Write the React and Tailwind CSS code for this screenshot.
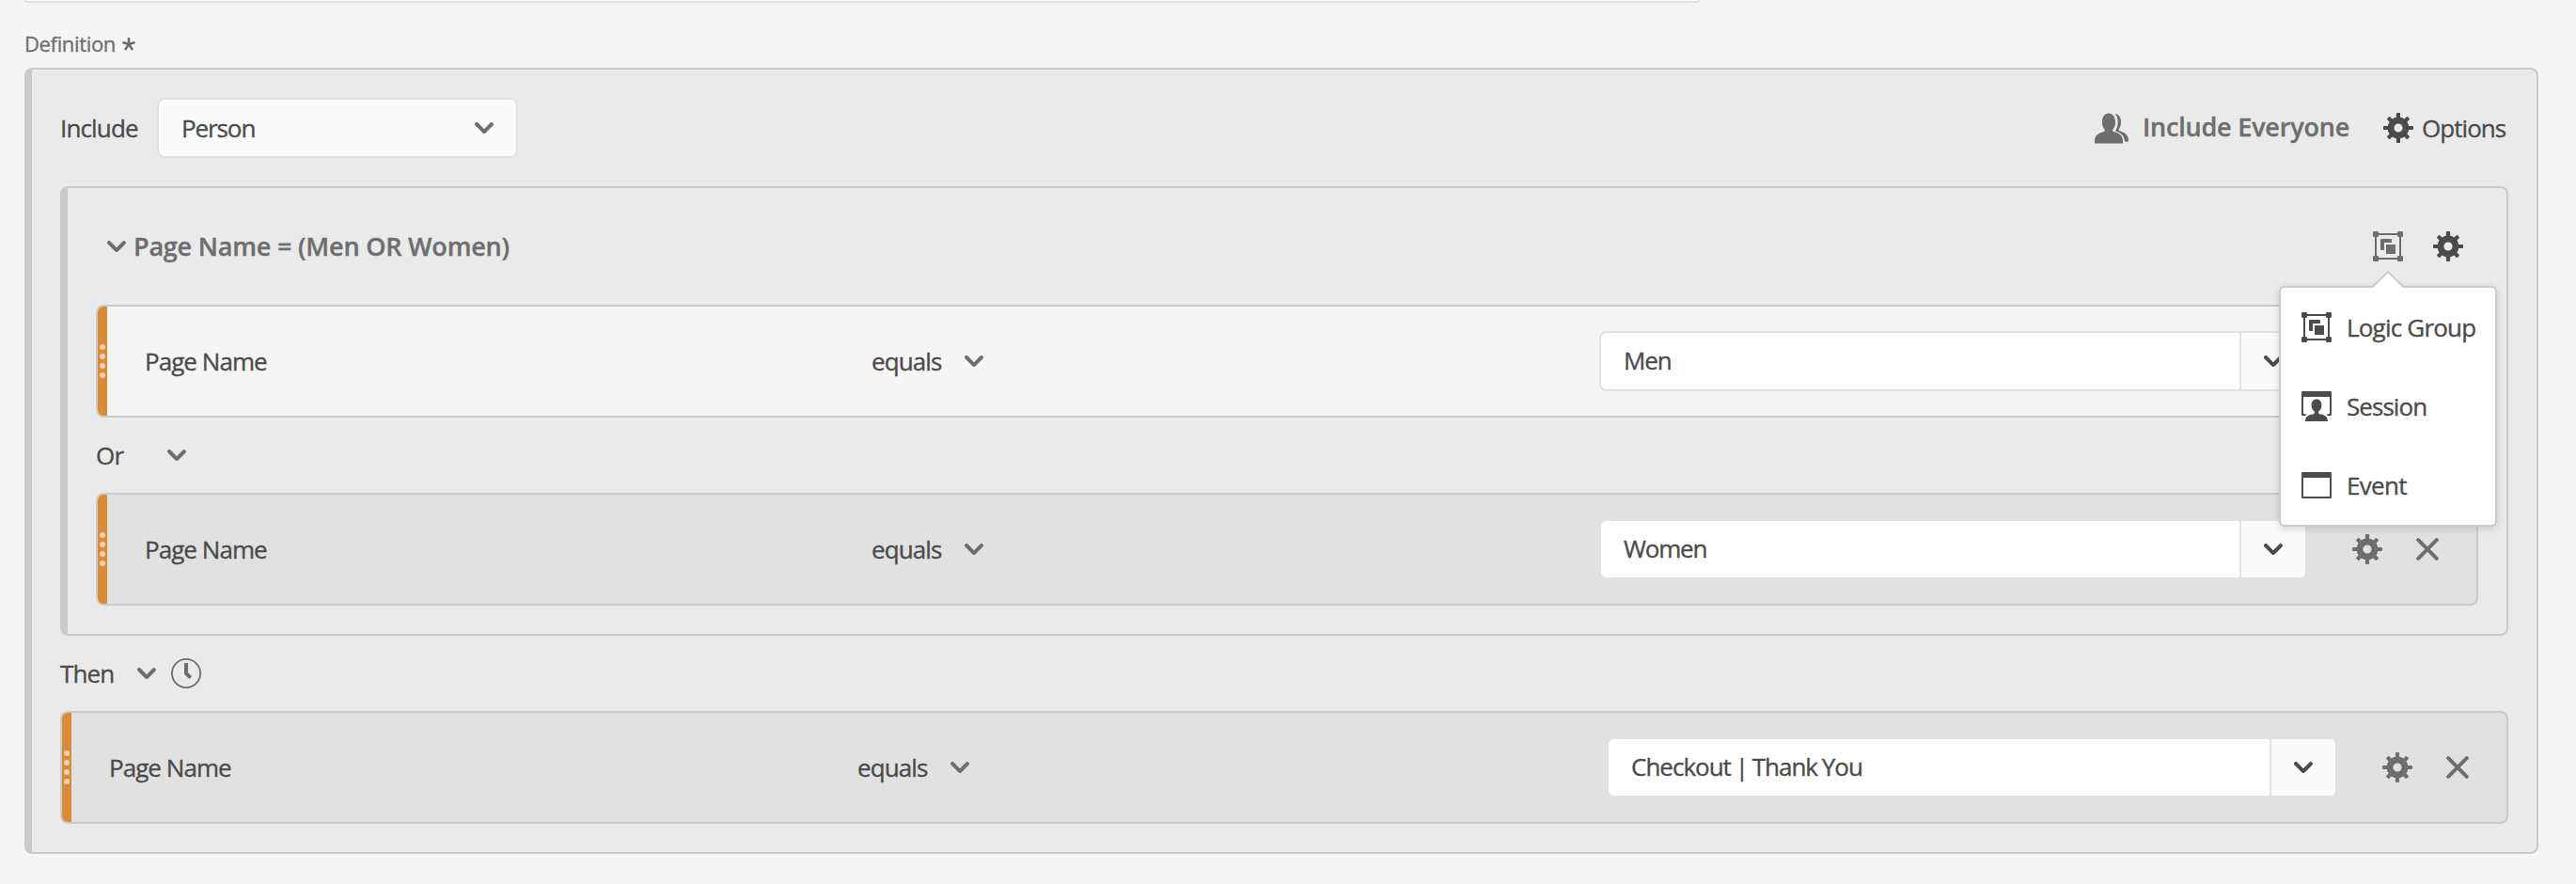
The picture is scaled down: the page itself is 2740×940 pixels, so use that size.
const chevronPath =
  "M9.99 1.01A1 1 0 0 0 8.283.303L5 3.586 1.717.303A1 1 0 1 0 .303 1.717l3.99 3.98a1 1 0 0 0 1.414 0l3.99-3.98a.997.997 0 0 0 .293-.707z";

function Chevron({ className = "" }) {
  return (
    <svg viewBox="0 0 10 6" className={`h-3 w-5 shrink-0 fill-current ${className}`}>
      <path d={chevronPath} />
    </svg>
  );
}

const toothAngles = [0, 45, 90, 135, 180, 225, 270, 315];

function Gear({ className = "" }) {
  return (
    <svg viewBox="0 0 32 32" className={`size-8 shrink-0 fill-current ${className}`}>
      <path
        fillRule="evenodd"
        d="M16 4.600a11.400 11.400 0 1 0 0 22.800a11.400 11.400 0 0 0 0-22.800zM16 11.400a4.600 4.600 0 1 1 0 9.200a4.600 4.600 0 0 1 0-9.200z"
      />
      {toothAngles.map((a) => (
        <rect key={a} x="13.900" y={a % 90 ? 0.6 : 0} width="4.200" height="7" rx="1" transform={`rotate(${a} 16 16)`} />
      ))}
    </svg>
  );
}

function People({ className = "" }) {
  return (
    <svg viewBox="0 0 36 33" className={`h-[33px] w-9 shrink-0 fill-current ${className}`}>
      <path d="M0 32.500V30c0-5.500 3.500-8.500 9.300-9.700 1.600-.3 1.900-1.900 1-3C8.800 15.400 8 12.800 8 9.700 8 4 10.800.5 15 .5s7 3.500 7 9.200c0 3.100-.8 5.700-2.300 7.600-.9 1.100-.6 2.700 1 3C26.500 21.500 30 24.500 30 30v2.500z" />
      <path d="M21.500.9c4 .2 6.500 3.400 6.500 8.600 0 3.300-.7 5.500-1.900 7.200-.7 1.100-.4 2.200.7 2.600 5.700 1.700 9.200 4.700 9.200 9.700v1.500h-4c-.3-5.500-3.500-9-8.800-10.400-1-.4-1.100-1.500-.4-2.400 1.300-1.900 1.900-4.400 1.900-7.600 0-4-1.100-7-3.200-9.200z" />
    </svg>
  );
}

function LogicGroup({ className = "" }) {
  return (
    <svg viewBox="0 0 32 32" className={`size-8 shrink-0 fill-current ${className}`}>
      <path fillRule="evenodd" d="M2 2h28v28H2zM4 4v24h24V4z" />
      <rect width="6" height="6" rx="1.2" />
      <rect x="26" width="6" height="6" rx="1.2" />
      <rect y="26" width="6" height="6" rx="1.2" />
      <rect x="26" y="26" width="6" height="6" rx="1.2" />
      <path d="M9 8h10a1 1 0 0 1 1 1v3h-8v8H9a1 1 0 0 1-1-1V9a1 1 0 0 1 1-1z" />
      <rect x="14" y="14" width="10" height="10" rx=".6" />
    </svg>
  );
}

function SessionIcon() {
  return (
    <svg viewBox="0 0 32 32" className="size-8 shrink-0 fill-current">
      <path d="M1 0h30a1 1 0 0 1 1 1v24a1 1 0 0 1-1 1h-3l-1.500-1.300 2.500-.7h1V6H2v18h1l2.500.7L4 26H1a1 1 0 0 1-1-1V1a1 1 0 0 1 1-1z" />
      <path d="M4 32c0-4.500 3-6.800 7.800-7.500 1.500-.2 2-.8 2-1.600v-1.500c-1.900-1.300-3.200-3.700-3.200-6.500 0-3.800 2.100-6.400 5.400-6.400s5.400 2.600 5.400 6.400c0 2.800-1.300 5.200-3.200 6.500v1.500c0 .8.500 1.400 2 1.600C25 25.200 28 27.500 28 32z" />
    </svg>
  );
}

function EventIcon() {
  return (
    <svg viewBox="0 0 32 32" className="size-8 shrink-0 fill-current">
      <path fillRule="evenodd" d="M1 2h30a1 1 0 0 1 1 1v26a1 1 0 0 1-1 1H1a1 1 0 0 1-1-1V3a1 1 0 0 1 1-1zM2 8v20h28V8z" />
    </svg>
  );
}

function Clock() {
  return (
    <svg viewBox="0 0 32 32" className="size-8 shrink-0 text-[#6e6e6e]" fill="none" stroke="currentColor">
      <circle cx="16" cy="16" r="15.100" strokeWidth="1.800" />
      <path d="M16 5v11l4.700 4.700" strokeWidth="4" strokeLinejoin="round" />
    </svg>
  );
}

function Cross() {
  return (
    <svg viewBox="0 0 24 24" className="size-6 shrink-0" fill="none" stroke="currentColor" strokeWidth="4" strokeLinecap="round">
      <path d="M2.200 2.200l19.600 19.600M21.800 2.200L2.200 21.800" />
    </svg>
  );
}

function Rule({ value, valueClass, bg, columns, inputWidth }) {
  return (
    <div className={`flex h-[120px] overflow-hidden rounded-lg border-2 border-[#cacaca] ${bg}`}>
      <div className="flex w-2.5 shrink-0 flex-col items-center justify-center gap-1 bg-[#da8b38]">
        {[0, 1, 2, 3].map((i) => (
          <span key={i} className="size-1.5 rounded-full bg-[#f0d1af]" />
        ))}
      </div>
      <div className={`grid flex-1 items-center ${columns}`}>
        <span className="pl-10 tracking-[-0.95px]">Page Name</span>
        <span className="flex items-center">
          <span className="w-[100px] pl-px tracking-[-0.9px]">equals</span>
          <Chevron className="text-[#6e6e6e]" />
        </span>
        <span className={`flex h-16 overflow-hidden rounded-lg border-2 border-[#e1e1e1] bg-white ${inputWidth}`}>
          <span className={`flex flex-1 items-center pb-[3px] pl-6 whitespace-pre ${valueClass}`}>{value}</span>
          <span className="flex w-[70px] items-center justify-center border-l-2 border-[#e1e1e1] bg-[#fafafa]">
            <Chevron />
          </span>
        </span>
        <span className="flex items-center justify-end gap-9 pr-10 text-[#6e6e6e]">
          <Gear />
          <Cross />
        </span>
      </div>
    </div>
  );
}

function LogicMenu() {
  return (
    <div className="absolute top-[42px] left-[-100px] z-10 w-[232px]">
      <svg viewBox="0 0 36 18" className="absolute -top-4 left-[98px] z-10 h-[18px] w-9">
        <path d="M2 18L18 2l16 16z" fill="#fff" />
        <path d="M1.500 17L18 1l16.500 16" fill="none" stroke="#cacaca" strokeWidth="1.800" />
      </svg>
      <ul className="rounded-[6px] border-2 border-[#cacaca] bg-white shadow-[0_2px_8px_rgba(0,0,0,0.15)]">
        <li className="flex h-[84px] items-center gap-4 pl-[22px]">
          <LogicGroup />
          <span className="whitespace-nowrap tracking-[-0.8px]">Logic Group</span>
        </li>
        <li className="flex h-[84px] items-center gap-4 pl-[22px]">
          <SessionIcon />
          <span className="tracking-[-0.95px]">Session</span>
        </li>
        <li className="flex h-[84px] items-center gap-4 pl-[22px]">
          <EventIcon />
          <span className="tracking-[-0.7px]">Event</span>
        </li>
      </ul>
    </div>
  );
}

export default function App() {
  return (
    <div className="h-[940px] w-[2740px] overflow-hidden bg-[#f5f5f5] pl-[26px] font-['Open_Sans','Noto_Sans',sans-serif] text-[26px] leading-8 text-[#4b4b4b] [-webkit-text-stroke:0.35px]">
      <div className="h-[3px] w-[1782px] rounded-b-lg border-2 border-t-0 border-[#e1e1e1] bg-white" />
      <div className="flex h-[69px] items-start gap-[7px] pt-[27px] text-[22px] tracking-[-0.35px] text-[#6e6e6e]">
        <span>Definition</span>
        <svg viewBox="0 0 14 14" className="mt-[10px] size-3.5 overflow-visible" fill="none" stroke="currentColor" strokeWidth="2.600">
          <path d="M7 7V0M7 7L.4 5M7 7l6.600-2M7 7l-4 6M7 7l4 6" />
        </svg>
      </div>

      <section className="h-[836px] w-[2674px] rounded-lg border-2 border-l-8 border-[#cacaca] bg-[#eaeaea] pr-[30px] pl-[30px]">
        <div className="flex h-[124px] items-center justify-between">
          <div className="flex items-center">
            <span className="w-[103px] tracking-[-0.85px]">Include</span>
            <div className="flex h-16 w-[384px] items-center justify-between rounded-lg border-2 border-[#e1e1e1] bg-[#fafafa] pr-6 pl-6">
              <span className="tracking-[-1.1px]">Person</span>
              <Chevron className="text-[#6e6e6e]" />
            </div>
          </div>
          <div className="flex items-center">
            <People className="text-[#6e6e6e]" />
            <span className="w-[256px] pb-0.5 pl-[15px] text-[27px] font-semibold tracking-[-0.2px] text-[#6e6e6e]">
              <span className="whitespace-nowrap">Include Everyone</span>
            </span>
            <span className="pl-[15px]">
              <Gear />
            </span>
            <span className="w-[101px] pl-[9px] tracking-[-0.95px]">Options</span>
          </div>
        </div>

        <section className="h-[478px] rounded-lg border-2 border-l-8 border-[#cacaca] px-[30px]">
          <div className="flex h-[124px] items-center justify-between pr-4 pl-3">
            <div className="flex items-center gap-2 text-[#6e6e6e]">
              <Chevron />
              <h2 className="text-[27px] font-semibold tracking-[-0.2px]">Page Name = (Men OR Women)</h2>
            </div>
            <div className="flex items-center gap-8">
              <div className="relative">
                <LogicGroup className="text-[#6e6e6e]" />
                <div className="absolute top-4 left-0 text-[#4b4b4b]">
                  <LogicMenu />
                </div>
              </div>
              <Gear />
            </div>
          </div>
          <Rule value="Men" valueClass="tracking-[-1.1px]" bg="bg-[#f5f5f5]" columns="grid-cols-[812px_775px_753px_1fr]" inputWidth="w-[753px]" />
          <div className="flex h-20 items-center">
            <span className="w-[76px] tracking-[-0.8px]">Or</span>
            <Chevron className="text-[#6e6e6e]" />
          </div>
          <Rule value="Women" valueClass="tracking-[-1.2px]" bg="bg-[#e1e1e1]" columns="grid-cols-[812px_775px_753px_1fr]" inputWidth="w-[753px]" />
        </section>

        <div className="flex h-20 items-center">
          <span className="w-[82px] tracking-[-0.85px]">Then</span>
          <Chevron className="mr-4 text-[#6e6e6e]" />
          <Clock />
        </div>
        <Rule value="Checkout | Thank You" valueClass="tracking-[-1px] [word-spacing:-1px]" bg="bg-[#e1e1e1]" columns="grid-cols-[835px_798px_777px_1fr]" inputWidth="w-[777px]" />
      </section>
    </div>
  );
}
